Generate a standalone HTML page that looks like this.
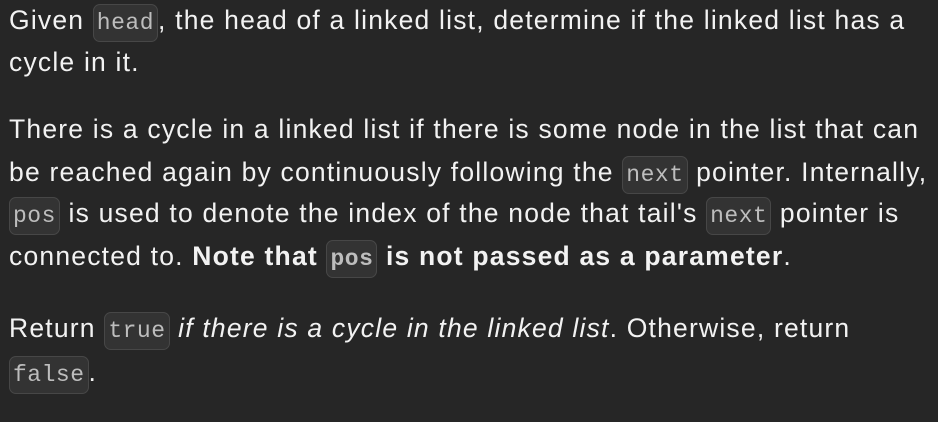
<!DOCTYPE html>
<html><head><meta charset="utf-8"><style>
html,body{margin:0;padding:0;background:#262626;width:938px;height:422px;overflow:hidden;position:relative}
body{font-family:"Liberation Sans",sans-serif;font-size:26.5px;color:#f2f2f2}
.l{position:absolute;left:9px;height:42px;line-height:42px;white-space:nowrap;letter-spacing:1.2px}
code{font-family:"Liberation Mono",monospace;font-size:23px;letter-spacing:0.5px;color:#bdbdbd;background:#333;border:1.5px solid #474747;border-radius:7px;padding:5px 3px}
</style></head><body>
<div class="l" style="top:-1px">Given <code>head</code>, the head of a linked list, determine if the linked list has a</div>
<div class="l" style="top:41px">cycle in it.</div>
<div class="l" style="top:108px">There is a cycle in a linked list if there is some node in the list that can</div>
<div class="l" style="top:151px">be reached again by continuously following the <code>next</code> pointer. Internally,</div>
<div class="l" style="top:192px"><code>pos</code> is used to denote the index of the node that tail's <code>next</code> pointer is</div>
<div class="l" style="top:235px">connected to. <b>Note that <code>pos</code> is not passed as a parameter</b>.</div>
<div class="l" style="top:307px">Return <code>true</code> <i>if there is a cycle in the linked list</i>. Otherwise, return</div>
<div class="l" style="top:351px"><code>false</code>.</div>
</body></html>
